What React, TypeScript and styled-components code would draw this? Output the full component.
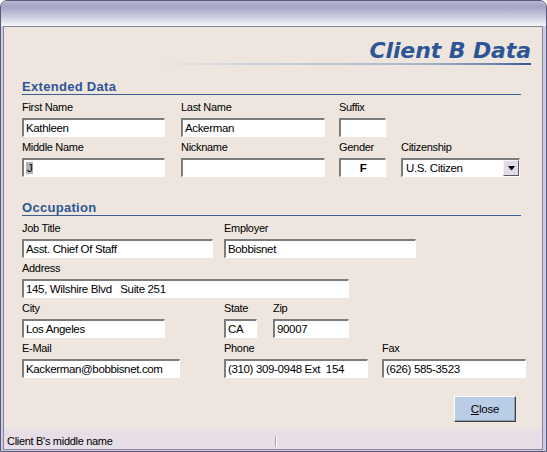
import React from 'react';
import styled, { createGlobalStyle } from 'styled-components';

const GlobalStyle = createGlobalStyle`
	* {
		box-sizing: border-box;
	}
	html,
	body {
		margin: 0;
		padding: 0;
		background: #ffffff;
		font-family: 'Liberation Sans', Arial, sans-serif;
	}
`;

const Window = styled.div`
	width: 547px;
	height: 452px;
	border: 1px solid #5a5978;
	border-radius: 7px 7px 0 0;
	background: #cccbdf;
	display: flex;
	flex-direction: column;
	overflow: hidden;
`;

const TitleBar = styled.div`
	height: 25px;
	flex-shrink: 0;
	background: linear-gradient(#b8b8d0 0%, #a4a4c4 22%, #c2c2d9 55%, #e9e9f2 88%, #f6f6fa 100%);
`;

const Body = styled.div`
	flex: 1;
	min-height: 0;
	margin: 0 3px 1px 2px;
	border: 1px solid #85849a;
	background: #eee6de;
	display: flex;
	flex-direction: column;
`;

const Content = styled.div`
	flex: 1;
	padding: 12px 11px 0 18px;
	display: flex;
	flex-direction: column;
`;

const Header = styled.div`
	display: flex;
	flex-direction: column;
	align-items: flex-end;
`;

const Title = styled.div`
	font-family: 'DejaVu Sans', Verdana, sans-serif;
	font-weight: bold;
	font-style: italic;
	font-size: 22px;
	line-height: 24px;
	letter-spacing: -0.1px;
	color: #2d5596;
`;

const TitleRule = styled.div`
	width: 372px;
	height: 2px;
	background: linear-gradient(
		to right,
		rgba(214, 218, 226, 0) 0%,
		#ccd2dc 25%,
		#a9b6ca 70%,
		#6d86ad 90%,
		#2d5596 100%
	);
`;

const SectionHeading = styled.div<{ $mt: number }>`
	margin: ${(p) => p.$mt}px 10px 0 0;
	font-size: 13px;
	font-weight: bold;
	letter-spacing: 0.3px;
	line-height: 14px;
	color: #2d5596;
	border-bottom: 1px solid #3b5d93;
`;

const Rows = styled.div`
	display: flex;
	flex-direction: column;
	gap: 3px;
	margin-top: 5px;
`;

const Row = styled.div`
	display: flex;
	align-items: flex-start;
`;

const Field = styled.div<{ $w: number; $ml?: number }>`
	display: flex;
	flex-direction: column;
	gap: 4px;
	width: ${(p) => p.$w}px;
	margin-left: ${(p) => p.$ml ?? 0}px;
	flex-shrink: 0;
`;

const Label = styled.div`
	font-size: 11px;
	line-height: 14px;
	letter-spacing: -0.3px;
	white-space: nowrap;
	color: #000;
`;

const TextBox = styled.div<{ $center?: boolean; $bold?: boolean }>`
	height: 19px;
	border-style: solid;
	border-width: 2px 1px 1px 2px;
	border-color: #7c7c7c #ffffff #ffffff #7c7c7c;
	background: #ffffff;
	padding: 0 2px;
	font-size: 11.5px;
	line-height: 16px;
	letter-spacing: -0.35px;
	white-space: pre;
	overflow: hidden;
	color: #000;
	text-align: ${(p) => (p.$center ? 'center' : 'left')};
	font-weight: ${(p) => (p.$bold ? 'bold' : 'normal')};
`;

const Selected = styled.span`
	background: #b4b4b4;
	padding: 0 1px;
`;

const SelectBox = styled(TextBox)`
	display: flex;
	padding-right: 0;
`;

const SelectValue = styled.span`
	flex: 1;
	padding-left: 1px;
`;

const DropButton = styled.div`
	width: 16px;
	align-self: stretch;
	background: #e3dbe9;
	border: 1px solid;
	border-color: #f6f3f8 #5a5a5a #5a5a5a #f6f3f8;
	display: flex;
	align-items: center;
	justify-content: center;

	&::after {
		content: '';
		width: 1px;
		height: 0;
		border-left: 3px solid transparent;
		border-right: 3px solid transparent;
		border-top: 4px solid #000;
	}
`;

const ButtonRow = styled.div`
	display: flex;
	justify-content: flex-end;
	margin: 18px 15px 0 0;
`;

const CloseButton = styled.button`
	width: 62px;
	height: 26px;
	padding: 0;
	background: #b9cde6;
	border: 1px solid;
	border-color: #ffffff #404040 #404040 #ffffff;
	box-shadow: inset -1px -1px 0 #8e9db5;
	font-family: 'Liberation Sans', Arial, sans-serif;
	font-size: 11.5px;
	letter-spacing: -0.2px;
	color: #000;
`;

const StatusBar = styled.div`
	height: 20px;
	flex-shrink: 0;
	background: #e7dee8;
	padding-top: 7px;
	display: flex;
	align-items: flex-start;
`;

const StatusPane = styled.div`
	width: 272px;
	padding-left: 3px;
	font-size: 11px;
	line-height: 11px;
	letter-spacing: -0.3px;
	color: #000;
	border-right: 1px solid #a09eaa;
	box-shadow: 1px 0 0 #ffffff;
`;

const App: React.FC = () => {
	return (
		<>
			<GlobalStyle />
			<Window>
				<TitleBar />
				<Body>
					<Content>
						<Header>
							<Title>Client B Data</Title>
							<TitleRule />
						</Header>

						<SectionHeading $mt={15}>Extended Data</SectionHeading>
						<Rows>
							<Row>
								<Field $w={143}>
									<Label>First Name</Label>
									<TextBox>Kathleen</TextBox>
								</Field>
								<Field $w={144} $ml={16}>
									<Label>Last Name</Label>
									<TextBox>Ackerman</TextBox>
								</Field>
								<Field $w={47} $ml={14}>
									<Label>Suffix</Label>
									<TextBox />
								</Field>
							</Row>
							<Row>
								<Field $w={143}>
									<Label>Middle Name</Label>
									<TextBox>
										<Selected>J</Selected>
									</TextBox>
								</Field>
								<Field $w={144} $ml={16}>
									<Label>Nickname</Label>
									<TextBox />
								</Field>
								<Field $w={47} $ml={14}>
									<Label>Gender</Label>
									<TextBox $center $bold>
										F
									</TextBox>
								</Field>
								<Field $w={119} $ml={15}>
									<Label>Citizenship</Label>
									<SelectBox>
										<SelectValue>U.S. Citizen</SelectValue>
										<DropButton />
									</SelectBox>
								</Field>
							</Row>
						</Rows>

						<SectionHeading $mt={24}>Occupation</SectionHeading>
						<Rows>
							<Row>
								<Field $w={191}>
									<Label>Job Title</Label>
									<TextBox>Asst. Chief Of Staff</TextBox>
								</Field>
								<Field $w={192} $ml={11}>
									<Label>Employer</Label>
									<TextBox>Bobbisnet</TextBox>
								</Field>
							</Row>
							<Row>
								<Field $w={327}>
									<Label>Address</Label>
									<TextBox>145, Wilshire Blvd   Suite 251</TextBox>
								</Field>
							</Row>
							<Row>
								<Field $w={143}>
									<Label>City</Label>
									<TextBox>Los Angeles</TextBox>
								</Field>
								<Field $w={33} $ml={59}>
									<Label>State</Label>
									<TextBox>CA</TextBox>
								</Field>
								<Field $w={76} $ml={16}>
									<Label>Zip</Label>
									<TextBox>90007</TextBox>
								</Field>
							</Row>
							<Row>
								<Field $w={158}>
									<Label>E-Mail</Label>
									<TextBox>Kackerman@bobbisnet.com</TextBox>
								</Field>
								<Field $w={144} $ml={44}>
									<Label>Phone</Label>
									<TextBox>(310) 309-0948 Ext  154</TextBox>
								</Field>
								<Field $w={144} $ml={14}>
									<Label>Fax</Label>
									<TextBox>(626) 585-3523</TextBox>
								</Field>
							</Row>
						</Rows>

						<ButtonRow>
							<CloseButton>
								<u>C</u>lose
							</CloseButton>
						</ButtonRow>
					</Content>
					<StatusBar>
						<StatusPane>Client B's middle name</StatusPane>
					</StatusBar>
				</Body>
			</Window>
		</>
	);
};

export default App;
